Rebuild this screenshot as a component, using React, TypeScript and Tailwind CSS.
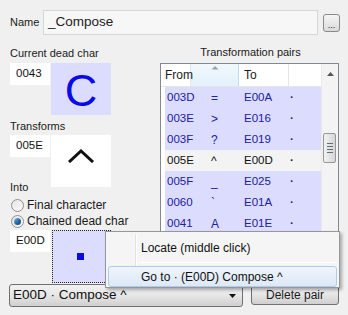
import React from 'react';

const ROWS = [
  { from: '003D', ch: '=', to: 'E00A', sel: true },
  { from: '003E', ch: '>', to: 'E016', sel: true },
  { from: '003F', ch: '?', to: 'E019', sel: true },
  { from: '005E', ch: '^', to: 'E00D', sel: false },
  { from: '005F', ch: '_', to: 'E025', sel: true },
  { from: '0060', ch: '`', to: 'E01A', sel: true },
  { from: '0041', ch: 'A', to: 'E01E', sel: true },
];

const CodeBox = ({ value }: { value: string }) => (
  <div className="w-[40px] h-[22px] bg-white pl-[6px] pt-[3px] text-[11.5px] leading-[14px] text-[#111]">
    {value}
  </div>
);

const Radio = ({ checked, label }: { checked: boolean; label: string }) => (
  <div className="h-[14px] flex items-center whitespace-nowrap">
    <div className="w-[13px] h-[13px] ml-[1px] shrink-0 rounded-full border border-[#8e8f8f] bg-gradient-to-br from-[#e6e6e6] to-[#fafafa] flex items-center justify-center">
      {checked && (
        <div className="w-[7px] h-[7px] rounded-full bg-gradient-to-br from-[#7fc3ea] via-[#2a6fa6] to-[#0f3f6b]" />
      )}
    </div>
    <span className="ml-[3px] text-[12px] leading-[14px]">{label}</span>
  </div>
);

export default function App() {
  return (
    <div className="w-[348px] h-[315px] bg-[#f0f0f0] relative overflow-hidden font-['Liberation_Sans',Arial,sans-serif] text-[11px] text-[#1a1a1a]">
      {/* name row */}
      <div className="pt-[10px] pl-[10px] flex items-center">
        <span className="w-[33px] text-[11px]">Name</span>
        <div className="w-[275px] h-[25px] border border-[#d6d6d6] bg-[#f7f7f7] flex items-center pl-[4px] text-[13.5px] text-[#222]">
          _Compose
        </div>
        <div className="ml-[5px] w-[17px] h-[18px] rounded-[3px] border border-[#8a8a8a] bg-gradient-to-b from-[#f6f6f6] to-[#d9d9d9] flex items-end justify-center text-[9px] leading-[12px]">
          ...
        </div>
      </div>

      <div className="flex mt-[11px]">
        {/* left column */}
        <div className="pl-[10px] w-[111px] flex flex-col">
          <div className="h-[14px] leading-[14px] whitespace-nowrap">Current dead char</div>
          <div className="mt-[3px] flex items-start">
            <CodeBox value="0043" />
            <div className="ml-[1px] w-[60px] h-[52px] bg-[#dcdcfe] flex items-center justify-center text-[45px] leading-[52px] text-[#0a0ae6] pt-[4px]">
              C
            </div>
          </div>
          <div className="mt-[4px] h-[14px] leading-[14px]">Transforms</div>
          <div className="mt-[2px] flex items-start">
            <div className="w-[41px] flex flex-col">
              <CodeBox value="005E" />
              <div className="mt-[23px] h-[14px] leading-[14px]">Into</div>
            </div>
            <div className="w-[60px] h-[52px] bg-white flex items-start justify-center pt-[14px]">
              <svg width="28" height="14" viewBox="0 0 28 14">
                <path d="M2 13 L14 2 L26 13" fill="none" stroke="#111" strokeWidth="3" />
              </svg>
            </div>
          </div>
          <div className="mt-[4px]">
            <Radio checked={false} label="Final character" />
          </div>
          <div className="mt-[2px]">
            <Radio checked={true} label="Chained dead char" />
          </div>
          <div className="mt-[2px] flex items-start">
            <CodeBox value="E00D" />
            <div className="ml-[2px] w-[59px] h-[53px] bg-[#dcdcfe] border border-dotted border-[#222] flex items-center justify-center">
              <div className="w-[7px] h-[7px] bg-[#0a0ae6] -ml-[2px]" />
            </div>
          </div>
        </div>

        {/* right column */}
        <div className="ml-[49px] w-[179px] flex flex-col">
          <div className="h-[14px] leading-[14px] text-center mt-[-1px] pl-[2px] whitespace-nowrap">Transformation pairs</div>
          <div className="mt-[4px] h-[219px] border border-[#828790] bg-white flex">
            <div className="flex-1 flex flex-col">
              <div className="h-[23px] flex border-b border-[#e5e5e5] text-[12px]">
                <div className="w-[30px] pl-[4px] flex items-center border-r border-[#e5e5e5] whitespace-nowrap relative z-10">From</div>
                <div className="w-[48px] relative bg-gradient-to-b from-[#f1f8fd] to-[#e3f1fb] border-r border-[#c0dcf3]">
                  <svg className="absolute left-[20px] top-[1px]" width="8" height="5" viewBox="0 0 8 5">
                    <path d="M0.5 4.5 L4 1 L7.5 4.5 Z" fill="#9aa3ab" />
                  </svg>
                </div>
                <div className="w-[50px] pl-[5px] flex items-center border-r border-[#e5e5e5]">To</div>
                <div className="flex-1" />
              </div>
              <div className="flex-1 pl-[4px]">
                {ROWS.map((r) => (
                  <div
                    key={r.from}
                    className={
                      r.sel
                        ? 'h-[21px] flex items-center text-[11.5px] text-[#2020a0] bg-[#dcdcfe]'
                        : 'h-[21px] flex items-center text-[11.5px] text-[#111] bg-[#f3f3f3]'
                    }
                  >
                    <span className="w-[46px] pl-[2px]">{r.from}</span>
                    <span className="w-[33px] text-[12px]">{r.ch}</span>
                    <span className="w-[46px]">{r.to}</span>
                    <span className="font-bold">·</span>
                  </div>
                ))}
              </div>
            </div>
            {/* scrollbar */}
            <div className="w-[17px] bg-[#f3f3f3] border-l border-[#e9e9e9] relative">
              <svg className="absolute left-[5px] top-[8px]" width="7" height="4" viewBox="0 0 7 4">
                <path d="M0 4 L3.5 0 L7 4 Z" fill="#555" />
              </svg>
              <div className="absolute left-[1px] top-[69px] w-[13px] h-[30px] rounded-[2px] border border-[#979797] bg-gradient-to-r from-[#f2f2f2] to-[#d6d6d6] flex flex-col items-center justify-center gap-[2px]">
                <div className="w-[6px] h-[1px] bg-[#5f6c7a]" />
                <div className="w-[6px] h-[1px] bg-[#5f6c7a]" />
                <div className="w-[6px] h-[1px] bg-[#5f6c7a]" />
                <div className="w-[6px] h-[1px] bg-[#5f6c7a]" />
              </div>
            </div>
          </div>
        </div>
      </div>

      {/* bottom row */}
      <div className="mt-[1px] pl-[9px] flex items-start">
        <div className="w-[234px] h-[23px] rounded-[3px] border border-[#707070] bg-gradient-to-b from-[#f2f2f2] via-[#e6e6e6] to-[#cfcfcf] flex items-center pl-[3px] pr-[6px] text-[13.5px] text-[#111]">
          <span className="flex-1">E00D · Compose ^</span>
          <svg width="7" height="4" viewBox="0 0 7 4">
            <path d="M0 0 L7 0 L3.5 4 Z" fill="#111" />
          </svg>
        </div>
        <div className="ml-[8px] w-[88px] h-[21px] rounded-[3px] border border-[#707070] bg-gradient-to-b from-[#f2f2f2] via-[#e6e6e6] to-[#cfcfcf] flex items-center justify-center text-[12px]">
          Delete pair
        </div>
      </div>

      {/* context menu */}
      <div className="absolute left-[105px] top-[231px] w-[235px] h-[57px] bg-[#f5f5f5] border border-[#979797] shadow-[2px_2px_3px_rgba(0,0,0,0.3)] p-[2px] text-[12px] text-[#111]">
        <div className="absolute left-[29px] top-[2px] bottom-[2px] w-[1px] bg-[#e2e3e3]" />
        <div className="absolute left-[30px] top-[2px] bottom-[2px] w-[1px] bg-white" />
        <div className="h-[27px] flex items-center pl-[33px] relative">Locate (middle click)</div>
        <div className="ml-[31px] h-[1px] bg-[#e0e0e0] border-b border-white mt-[1px]" />
        <div className="mt-[3px] h-[21px] rounded-[3px] border border-[#aeccea] bg-gradient-to-b from-[#eef5fc] to-[#dde9f7] flex items-center pl-[32px] relative">
          Go to · (E00D) Compose ^
        </div>
      </div>
    </div>
  );
}
